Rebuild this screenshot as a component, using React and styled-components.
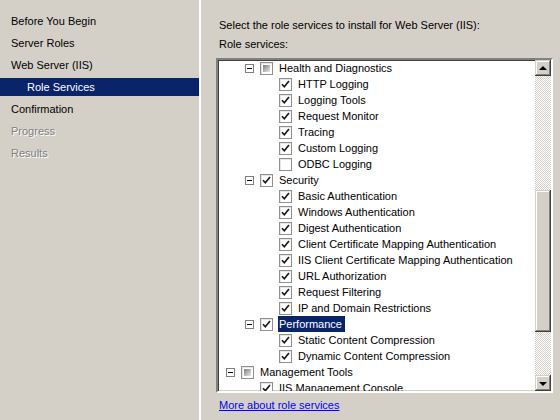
import React from "react";
import styled, { createGlobalStyle } from "styled-components";

const Global = createGlobalStyle`
  html, body { margin: 0; padding: 0; background: #d4d0c8; }
  body { font-family: "Liberation Sans", Arial, sans-serif; font-size: 11px; color: #000; }
`;

const Frame = styled.div`
  display: flex;
  width: 560px;
  height: 420px;
  overflow: hidden;
  background: #d4d0c8;
`;

const Sidebar = styled.nav`
  width: 201px;
  flex: none;
  border-right: 2px solid #ffffff;
  display: flex;
  flex-direction: column;
  gap: 4px;
  padding-top: 12px;
  box-sizing: border-box;
`;

const NavItem = styled.div`
  height: 18px;
  line-height: 18px;
  padding-left: ${(p) => (p.$sub ? 27 : 11)}px;
  background: ${(p) => (p.$active ? "#0a246a" : "transparent")};
  color: ${(p) => (p.$active ? "#ffffff" : p.$disabled ? "#808080" : "#000000")};
  text-shadow: ${(p) => (p.$disabled ? "1px 1px 0 #ffffff" : "none")};
  white-space: nowrap;
`;

const Main = styled.main`
  flex: 1;
  display: flex;
  flex-direction: column;
  padding: 17px 7px 0 15px;
`;

const Heading = styled.div`
  line-height: 16px;
  padding-left: 3px;
  white-space: nowrap;
`;

const SubHeading = styled(Heading)`
  margin-top: 3px;
`;

const ListBox = styled.div`
  margin-top: 6px;
  width: 337px;
  height: 335px;
  box-sizing: border-box;
  border-style: solid;
  border-width: 2px;
  border-color: #808080 #ffffff #ffffff #808080;
  box-shadow: inset 1px 1px 0 #404040, inset -1px -1px 0 #d4d0c8;
  background: #ffffff;
  display: flex;
  overflow: hidden;
`;

const Tree = styled.div`
  flex: 1;
  overflow: hidden;
`;

const Row = styled.div`
  display: flex;
  align-items: center;
  height: 16px;
  padding-left: ${(p) => 8 + p.$level * 19}px;
  white-space: nowrap;
`;

const ExpanderSlot = styled.div`
  width: 15px;
  flex: none;
  display: flex;
  align-items: center;
`;

const Expander = styled.div`
  width: 9px;
  height: 9px;
  box-sizing: border-box;
  border: 1px solid #808080;
  background: #ffffff;
  display: flex;
  align-items: center;
  justify-content: center;
  &::after {
    content: "";
    width: 5px;
    height: 1px;
    background: #000000;
  }
`;

const Box = styled.div`
  width: 13px;
  height: 13px;
  flex: none;
  box-sizing: border-box;
  border: 1px solid #8e8f8f;
  background: #ffffff;
  box-shadow: inset 1px 1px 0 #e6e6e6;
  margin-right: 5px;
  display: flex;
  align-items: center;
  justify-content: center;
`;

const Partial = styled.div`
  width: 7px;
  height: 7px;
  background: linear-gradient(135deg, #7a7a7a 0%, #b4b4b4 50%, #e8e8e8 100%);
`;

const Label = styled.span`
  line-height: 16px;
  padding: 0 3px 0 1px;
  background: ${(p) => (p.$selected ? "#0a246a" : "transparent")};
  color: ${(p) => (p.$selected ? "#ffffff" : "#000000")};
`;

const ScrollBar = styled.div`
  width: 16px;
  flex: none;
  display: flex;
  flex-direction: column;
  background-color: #ffffff;
  background-image: repeating-conic-gradient(#d4d0c8 0 25%, #ffffff 0 50%);
  background-size: 2px 2px;
`;

const Raised = styled.div`
  background: #d4d0c8;
  box-shadow: inset -1px -1px 0 #404040, inset 1px 1px 0 #d4d0c8,
    inset -2px -2px 0 #808080, inset 2px 2px 0 #ffffff;
`;

const ArrowButton = styled(Raised)`
  height: 16px;
  flex: none;
  display: flex;
  align-items: center;
  justify-content: center;
  &::after {
    content: "";
    width: 0;
    height: 0;
    border-left: 4px solid transparent;
    border-right: 4px solid transparent;
    ${(p) =>
      p.$down
        ? "border-top: 4px solid #000; margin-top: 1px;"
        : "border-bottom: 4px solid #000; margin-top: -1px;"}
  }
`;

const Track = styled.div`
  flex: 1;
  display: flex;
  flex-direction: column;
  padding-top: ${(p) => p.$offset}px;
`;

const Thumb = styled(Raised)`
  height: 142px;
  flex: none;
`;

const Link = styled.a`
  margin-top: 4px;
  padding-left: 3px;
  line-height: 16px;
  color: #0000ff;
  text-decoration: underline;
  white-space: nowrap;
  cursor: pointer;
`;

const Check = () => (
  <svg width="9" height="9" viewBox="0 0 9 9">
    <path d="M1 4.2 L3.3 6.8 L8 1" fill="none" stroke="#1c1c1c" strokeWidth="1.7" />
  </svg>
);

const nav = [
  { t: "Before You Begin" },
  { t: "Server Roles" },
  { t: "Web Server (IIS)" },
  { t: "Role Services", sub: true, active: true },
  { t: "Confirmation" },
  { t: "Progress", disabled: true },
  { t: "Results", disabled: true },
];

const tree = [
  { l: 1, t: "Health and Diagnostics", exp: true, s: "partial" },
  { l: 2, t: "HTTP Logging", s: "on" },
  { l: 2, t: "Logging Tools", s: "on" },
  { l: 2, t: "Request Monitor", s: "on" },
  { l: 2, t: "Tracing", s: "on" },
  { l: 2, t: "Custom Logging", s: "on" },
  { l: 2, t: "ODBC Logging", s: "off" },
  { l: 1, t: "Security", exp: true, s: "on" },
  { l: 2, t: "Basic Authentication", s: "on" },
  { l: 2, t: "Windows Authentication", s: "on" },
  { l: 2, t: "Digest Authentication", s: "on" },
  { l: 2, t: "Client Certificate Mapping Authentication", s: "on" },
  { l: 2, t: "IIS Client Certificate Mapping Authentication", s: "on" },
  { l: 2, t: "URL Authorization", s: "on" },
  { l: 2, t: "Request Filtering", s: "on" },
  { l: 2, t: "IP and Domain Restrictions", s: "on" },
  { l: 1, t: "Performance", exp: true, s: "on", sel: true },
  { l: 2, t: "Static Content Compression", s: "on" },
  { l: 2, t: "Dynamic Content Compression", s: "on" },
  { l: 0, t: "Management Tools", exp: true, s: "partial" },
  { l: 1, t: "IIS Management Console", s: "on" },
];

export default function App() {
  return (
    <>
      <Global />
      <Frame>
        <Sidebar>
          {nav.map((n) => (
            <NavItem key={n.t} $sub={n.sub} $active={n.active} $disabled={n.disabled}>
              {n.t}
            </NavItem>
          ))}
        </Sidebar>
        <Main>
          <Heading>Select the role services to install for Web Server (IIS):</Heading>
          <SubHeading>Role services:</SubHeading>
          <ListBox>
            <Tree>
              {tree.map((r) => (
                <Row key={r.t} $level={r.l}>
                  <ExpanderSlot>{r.exp && <Expander />}</ExpanderSlot>
                  <Box>
                    {r.s === "on" && <Check />}
                    {r.s === "partial" && <Partial />}
                  </Box>
                  <Label $selected={r.sel}>{r.t}</Label>
                </Row>
              ))}
            </Tree>
            <ScrollBar>
              <ArrowButton />
              <Track $offset={114}>
                <Thumb />
              </Track>
              <ArrowButton $down />
            </ScrollBar>
          </ListBox>
          <Link>More about role services</Link>
        </Main>
      </Frame>
    </>
  );
}
